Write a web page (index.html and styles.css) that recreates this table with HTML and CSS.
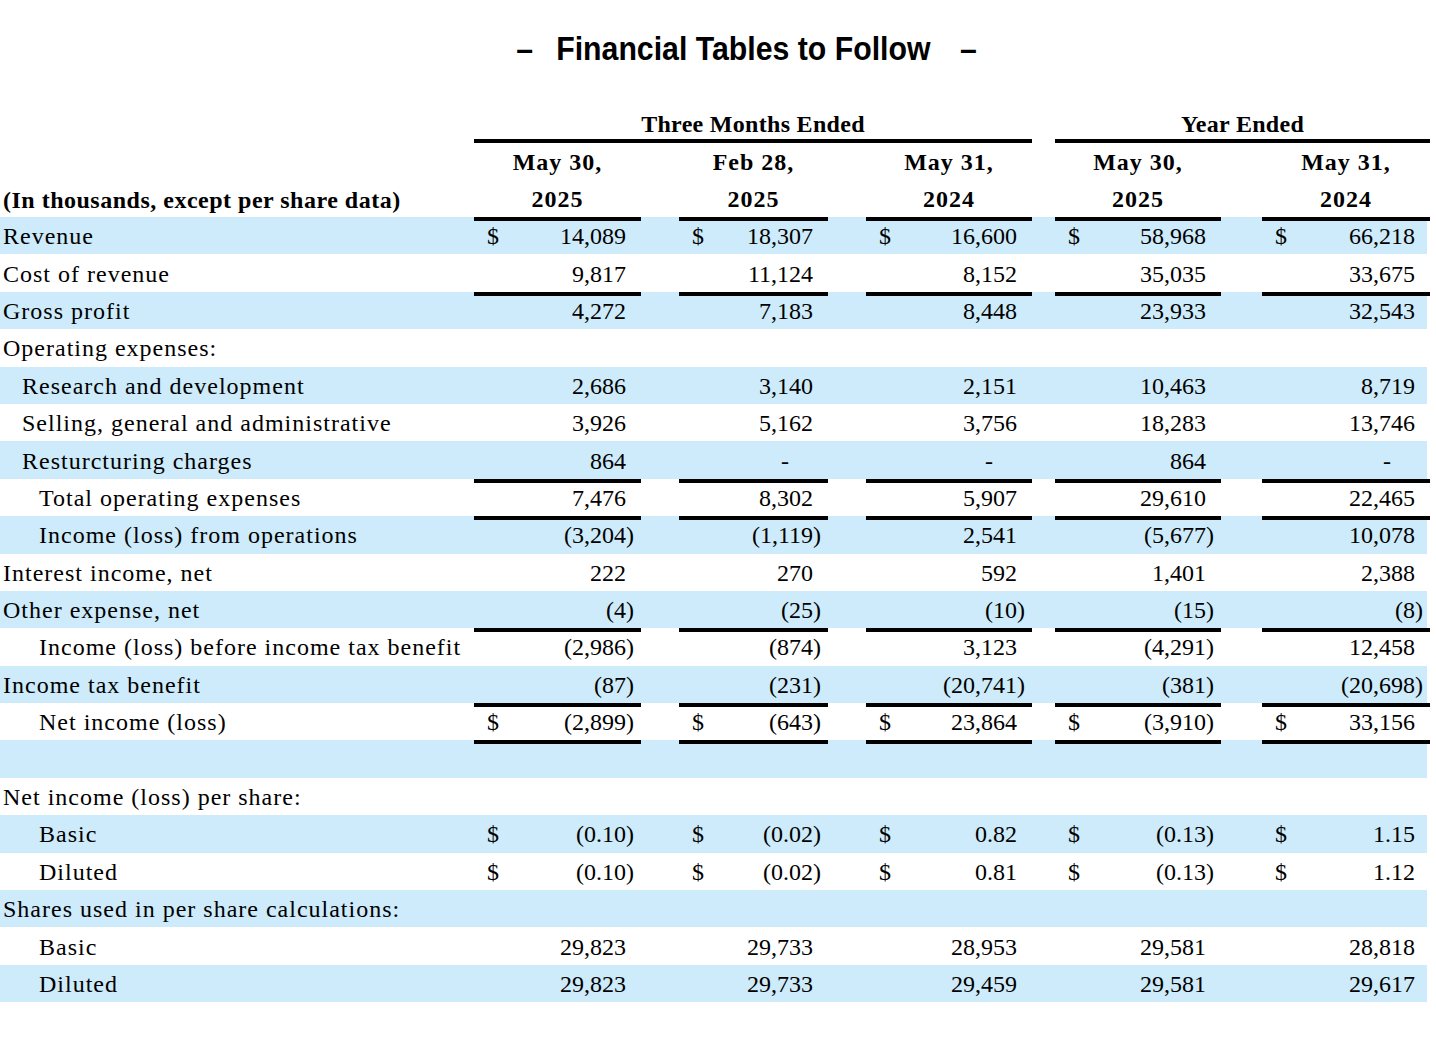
FILE: index.html
```html
<!DOCTYPE html>
<html>
<head>
<meta charset="utf-8">
<link rel="stylesheet" href="styles.css">
</head>
<body>
<div class="title"><span class="dl">–</span><span class="tt">Financial Tables to Follow</span><span class="dr">–</span></div>

<div class="table">
  <div class="row grp">
    <div class="g3">Three Months Ended</div>
    <div class="gy">Year Ended</div>
  </div>
  <div class="row hd">
    <div class="h c1">May 30,</div>
    <div class="h c2">Feb 28,</div>
    <div class="h c3">May 31,</div>
    <div class="h c4">May 30,</div>
    <div class="h c5">May 31,</div>
  </div>
  <div class="row hd">
    <div class="lbl b">(In thousands, except per share data)</div>
    <div class="h c1">2025</div>
    <div class="h c2">2025</div>
    <div class="h c3">2024</div>
    <div class="h c4">2025</div>
    <div class="h c5">2024</div>
  </div>

  <div class="row blue ruled">
    <div class="lbl">Revenue</div>
    <div class="v c1"><span class="cur">$</span><span class="n">14,089</span></div>
    <div class="v c2"><span class="cur">$</span><span class="n">18,307</span></div>
    <div class="v c3"><span class="cur">$</span><span class="n">16,600</span></div>
    <div class="v c4"><span class="cur">$</span><span class="n">58,968</span></div>
    <div class="v c5"><span class="cur">$</span><span class="n">66,218</span></div>
  </div>
  <div class="row">
    <div class="lbl">Cost of revenue</div>
    <div class="v c1"><span class="n">9,817</span></div>
    <div class="v c2"><span class="n">11,124</span></div>
    <div class="v c3"><span class="n">8,152</span></div>
    <div class="v c4"><span class="n">35,035</span></div>
    <div class="v c5"><span class="n">33,675</span></div>
  </div>
  <div class="row blue ruled">
    <div class="lbl">Gross profit</div>
    <div class="v c1"><span class="n">4,272</span></div>
    <div class="v c2"><span class="n">7,183</span></div>
    <div class="v c3"><span class="n">8,448</span></div>
    <div class="v c4"><span class="n">23,933</span></div>
    <div class="v c5"><span class="n">32,543</span></div>
  </div>
  <div class="row">
    <div class="lbl">Operating expenses:</div>
  </div>
  <div class="row blue">
    <div class="lbl i1">Research and development</div>
    <div class="v c1"><span class="n">2,686</span></div>
    <div class="v c2"><span class="n">3,140</span></div>
    <div class="v c3"><span class="n">2,151</span></div>
    <div class="v c4"><span class="n">10,463</span></div>
    <div class="v c5"><span class="n">8,719</span></div>
  </div>
  <div class="row">
    <div class="lbl i1">Selling, general and administrative</div>
    <div class="v c1"><span class="n">3,926</span></div>
    <div class="v c2"><span class="n">5,162</span></div>
    <div class="v c3"><span class="n">3,756</span></div>
    <div class="v c4"><span class="n">18,283</span></div>
    <div class="v c5"><span class="n">13,746</span></div>
  </div>
  <div class="row blue">
    <div class="lbl i1">Resturcturing charges</div>
    <div class="v c1"><span class="n">864</span></div>
    <div class="v c2"><span class="n dash">-</span></div>
    <div class="v c3"><span class="n dash">-</span></div>
    <div class="v c4"><span class="n">864</span></div>
    <div class="v c5"><span class="n dash">-</span></div>
  </div>
  <div class="row ruled">
    <div class="lbl i2">Total operating expenses</div>
    <div class="v c1"><span class="n">7,476</span></div>
    <div class="v c2"><span class="n">8,302</span></div>
    <div class="v c3"><span class="n">5,907</span></div>
    <div class="v c4"><span class="n">29,610</span></div>
    <div class="v c5"><span class="n">22,465</span></div>
  </div>
  <div class="row blue ruled">
    <div class="lbl i2">Income (loss) from operations</div>
    <div class="v c1"><span class="n">(3,204<span class="rp">)</span></span></div>
    <div class="v c2"><span class="n">(1,119<span class="rp">)</span></span></div>
    <div class="v c3"><span class="n">2,541</span></div>
    <div class="v c4"><span class="n">(5,677<span class="rp">)</span></span></div>
    <div class="v c5"><span class="n">10,078</span></div>
  </div>
  <div class="row">
    <div class="lbl">Interest income, net</div>
    <div class="v c1"><span class="n">222</span></div>
    <div class="v c2"><span class="n">270</span></div>
    <div class="v c3"><span class="n">592</span></div>
    <div class="v c4"><span class="n">1,401</span></div>
    <div class="v c5"><span class="n">2,388</span></div>
  </div>
  <div class="row blue">
    <div class="lbl">Other expense, net</div>
    <div class="v c1"><span class="n">(4<span class="rp">)</span></span></div>
    <div class="v c2"><span class="n">(25<span class="rp">)</span></span></div>
    <div class="v c3"><span class="n">(10<span class="rp">)</span></span></div>
    <div class="v c4"><span class="n">(15<span class="rp">)</span></span></div>
    <div class="v c5"><span class="n">(8<span class="rp">)</span></span></div>
  </div>
  <div class="row ruled">
    <div class="lbl i2">Income (loss) before income tax benefit</div>
    <div class="v c1"><span class="n">(2,986<span class="rp">)</span></span></div>
    <div class="v c2"><span class="n">(874<span class="rp">)</span></span></div>
    <div class="v c3"><span class="n">3,123</span></div>
    <div class="v c4"><span class="n">(4,291<span class="rp">)</span></span></div>
    <div class="v c5"><span class="n">12,458</span></div>
  </div>
  <div class="row blue">
    <div class="lbl">Income tax benefit</div>
    <div class="v c1"><span class="n">(87<span class="rp">)</span></span></div>
    <div class="v c2"><span class="n">(231<span class="rp">)</span></span></div>
    <div class="v c3"><span class="n">(20,741<span class="rp">)</span></span></div>
    <div class="v c4"><span class="n">(381<span class="rp">)</span></span></div>
    <div class="v c5"><span class="n">(20,698<span class="rp">)</span></span></div>
  </div>
  <div class="row ruled">
    <div class="lbl i2">Net income (loss)</div>
    <div class="v c1"><span class="cur">$</span><span class="n">(2,899<span class="rp">)</span></span></div>
    <div class="v c2"><span class="cur">$</span><span class="n">(643<span class="rp">)</span></span></div>
    <div class="v c3"><span class="cur">$</span><span class="n">23,864</span></div>
    <div class="v c4"><span class="cur">$</span><span class="n">(3,910<span class="rp">)</span></span></div>
    <div class="v c5"><span class="cur">$</span><span class="n">33,156</span></div>
  </div>
  <div class="row blue ruled">
    <div class="lbl"></div>
    <div class="v c1"></div>
    <div class="v c2"></div>
    <div class="v c3"></div>
    <div class="v c4"></div>
    <div class="v c5"></div>
  </div>
  <div class="row">
    <div class="lbl">Net income (loss) per share:</div>
  </div>
  <div class="row blue">
    <div class="lbl i2">Basic</div>
    <div class="v c1"><span class="cur">$</span><span class="n">(0.10<span class="rp">)</span></span></div>
    <div class="v c2"><span class="cur">$</span><span class="n">(0.02<span class="rp">)</span></span></div>
    <div class="v c3"><span class="cur">$</span><span class="n">0.82</span></div>
    <div class="v c4"><span class="cur">$</span><span class="n">(0.13<span class="rp">)</span></span></div>
    <div class="v c5"><span class="cur">$</span><span class="n">1.15</span></div>
  </div>
  <div class="row">
    <div class="lbl i2">Diluted</div>
    <div class="v c1"><span class="cur">$</span><span class="n">(0.10<span class="rp">)</span></span></div>
    <div class="v c2"><span class="cur">$</span><span class="n">(0.02<span class="rp">)</span></span></div>
    <div class="v c3"><span class="cur">$</span><span class="n">0.81</span></div>
    <div class="v c4"><span class="cur">$</span><span class="n">(0.13<span class="rp">)</span></span></div>
    <div class="v c5"><span class="cur">$</span><span class="n">1.12</span></div>
  </div>
  <div class="row blue">
    <div class="lbl">Shares used in per share calculations:</div>
  </div>
  <div class="row">
    <div class="lbl i2">Basic</div>
    <div class="v c1"><span class="n">29,823</span></div>
    <div class="v c2"><span class="n">29,733</span></div>
    <div class="v c3"><span class="n">28,953</span></div>
    <div class="v c4"><span class="n">29,581</span></div>
    <div class="v c5"><span class="n">28,818</span></div>
  </div>
  <div class="row blue">
    <div class="lbl i2">Diluted</div>
    <div class="v c1"><span class="n">29,823</span></div>
    <div class="v c2"><span class="n">29,733</span></div>
    <div class="v c3"><span class="n">29,459</span></div>
    <div class="v c4"><span class="n">29,581</span></div>
    <div class="v c5"><span class="n">29,617</span></div>
  </div>
</div>
</body>
</html>
```

FILE: styles.css
```css
html, body {
  margin: 0;
  padding: 0;
  background: #ffffff;
}

body {
  font-family: "Liberation Serif", "Times New Roman", serif;
  color: #000;
  width: 1436px;
}

.title {
  display: flex;
  justify-content: center;
  align-items: center;
  padding: 28px 0 0 64px;
  height: 40px;
  line-height: 40px;
  font-family: "Liberation Sans", Arial, sans-serif;
  font-weight: bold;
  font-size: 34px;
  transform: scaleX(0.89);
}

.dl {
  margin-right: 26px;
}

.dr {
  margin-left: 33px;
}

.table {
  margin-top: 41px;
  width: 1427px;
}

.row {
  display: grid;
  grid-template-columns: 474px 167px 38px 149px 38px 166px 23px 166px 41px 168px;
  height: 37.4px;
  font-size: 24px;
}

.row.blue {
  background: #cdebfa;
}

.row.grp {
  height: 34px;
  font-weight: bold;
  font-size: 24px;
  letter-spacing: 0.3px;
}

.g3, .gy {
  line-height: 30px;
  text-align: center;
  border-bottom: 4px solid #000;
}

.g3 { grid-column: 2 / 7; }
.gy { grid-column: 8 / 11; }

.row.hd {
  height: 37px;
}

.h {
  font-weight: bold;
  letter-spacing: 1px;
  text-align: center;
  line-height: 37px;
  padding-top: 1px;
}

.c1 { grid-column: 2; }
.c2 { grid-column: 4; }
.c3 { grid-column: 6; }
.c4 { grid-column: 8; }
.c5 { grid-column: 10; }

.lbl {
  grid-column: 1;
  display: flex;
  align-items: center;
  padding-left: 3px;
  padding-top: 2px;
  letter-spacing: 1px;
  white-space: nowrap;
}

.lbl.b {
  font-weight: bold;
  letter-spacing: 0.5px;
}

.lbl.i1 { padding-left: 22px; }
.lbl.i2 { padding-left: 39px; }

.v {
  display: flex;
  align-items: center;
  padding: 2px 15px 0 13px;
  white-space: nowrap;
}

.ruled .v {
  box-shadow: inset 0 4px 0 #000;
}

.cur {
  flex: none;
}

.n {
  margin-left: auto;
}

.rp {
  margin-right: -8px;
}

.dash {
  margin-right: 24px;
}
```
